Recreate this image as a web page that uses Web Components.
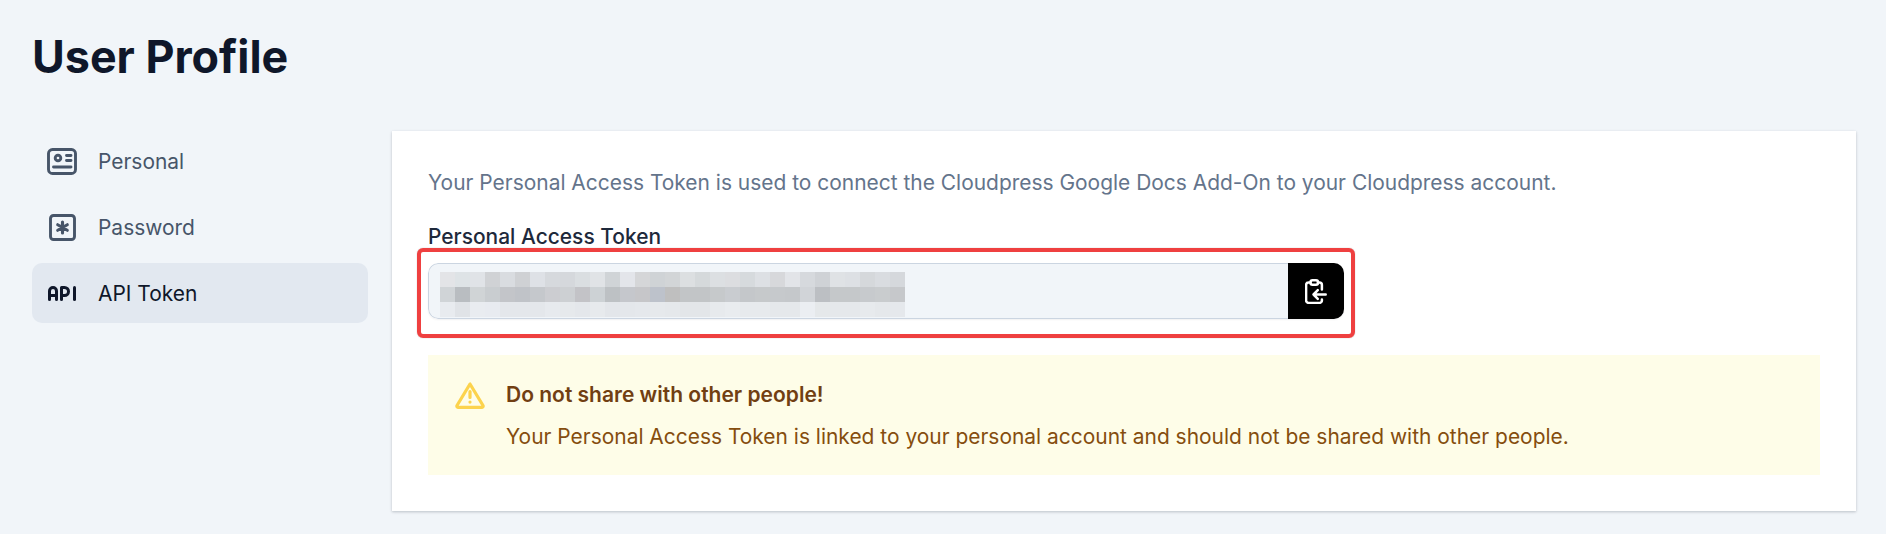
<!DOCTYPE html>
<html>
<head>
<meta charset="utf-8">
<style>
  html, body { margin: 0; background: #f1f5f9; }
  body { font-family: Inter, "Liberation Sans", sans-serif; }
</style>
</head>
<body>
<user-profile>
  <side-nav slot="nav">
    <nav-item icon="personal">Personal</nav-item>
    <nav-item icon="password">Password</nav-item>
    <nav-item icon="api" active>API Token</nav-item>
  </side-nav>
  <token-card slot="main">
    <token-field label="Personal Access Token"></token-field>
    <warn-box heading="Do not share with other people!">Your Personal Access Token is linked to your personal account and should not be shared with other people.</warn-box>
  </token-card>
</user-profile>
<script>
const ICONS = {
  personal: `<svg width="30" height="27" viewBox="0 0 30 27" fill="none" stroke="currentColor" stroke-width="2.900" stroke-linecap="round" stroke-linejoin="round">
    <rect x="1.500" y="1.500" width="27" height="24" rx="4"/>
    <circle cx="11" cy="10" r="2.800"/>
    <path d="M19.500 7.500h4.500M19.500 12.500h4.500M6.500 19h17.500"/></svg>`,
  password: `<svg width="27" height="27" viewBox="0 0 27 27" fill="none" stroke="currentColor" stroke-linecap="round" stroke-linejoin="round">
    <rect x="1.500" y="1.500" width="24" height="24" rx="3" stroke-width="2.900"/>
    <path d="M13.500 8v11M8.700 10.750l9.600 5.500M18.300 10.750l-9.600 5.500" stroke-width="3.100"/></svg>`,
  api: `<svg width="28" height="15" viewBox="0 0 28 15" fill="none" stroke="currentColor" stroke-width="3" stroke-linecap="round" stroke-linejoin="round">
    <path d="M1.500 13.500V5a3.500 3.500 0 0 1 7 0v8.500M1.500 9.500h7"/>
    <path d="M13.500 13.500V1.500h3a4 4 0 0 1 0 8h-3"/>
    <path d="M26.500 1.500v12"/></svg>`
};

class UserProfile extends HTMLElement {
  connectedCallback() {
    this.attachShadow({ mode: 'open' });
    this.shadowRoot.innerHTML = `
      <style>
        :host { display: block; padding: 32px 30px 23px 32px; color: #0f172a; }
        h1 { margin: 0 0 49px; font-size: 44.800px; line-height: 50px; font-weight: 700; }
        .cols { display: grid; grid-template-columns: 336px 1fr; gap: 24px; }
      </style>
      <h1>User Profile</h1>
      <div class="cols"><slot name="nav"></slot><slot name="main"></slot></div>
    `;
  }
}

class SideNav extends HTMLElement {
  connectedCallback() {
    this.attachShadow({ mode: 'open' });
    this.shadowRoot.innerHTML = `
      <style>
        :host { display: flex; flex-direction: column; gap: 6px; }
      </style>
      <slot></slot>
    `;
  }
}

class NavItem extends HTMLElement {
  connectedCallback() {
    this.attachShadow({ mode: 'open' });
    this.shadowRoot.innerHTML = `
      <style>
        :host { display: flex; align-items: center; height: 60px; border-radius: 10px; font-size: 20.950px; color: #475569; }
        :host([active]) { background: #e2e8f0; color: #0f172a; }
        .icon { width: 60px; margin-right: 6px; flex: none; display: flex; justify-content: center; }
        .icon svg { display: block; }
      </style>
      <span class="icon">${ICONS[this.getAttribute('icon')]}</span>
      <slot></slot>
    `;
  }
}

class TokenCard extends HTMLElement {
  connectedCallback() {
    this.attachShadow({ mode: 'open' });
    this.shadowRoot.innerHTML = `
      <style>
        :host { display: block; background: #fff; padding: 36px; box-shadow: 0 1px 3px rgba(15,23,42,.16), 0 1px 2px rgba(15,23,42,.08); }
        p { margin: 0 0 24px; font-size: 20.950px; line-height: 32px; color: #64748b; }
      </style>
      <p>Your Personal Access Token is used to connect the Cloudpress Google Docs Add-On to your Cloudpress account.</p>
      <slot></slot>
    `;
  }
}

// blurred token, one row of block colours per pixelated line
const BLUR = [
  'e3e4e7 dee3e6 e0e3e7 d0d2d5 d9dce0 cfd1d4 dee1e6 d6d9dd d5d8dc dadee1 e0e3e6 d0d4d7 e3e5ea d5d6d8 cfd3d6 d2d5d7 dcdfe1 d5d9db dcdfe2 dcdde0 d6dadd dde0e4 d7d8db e2e4e8 d6d9dd cfd2d6 dfe2e5 dde0e4 d5d8db d9dce0 d5d8dc',
  'd0d4d7 b9bdc1 d0d4d6 c9cdd0 c3c5c9 c0c3c8 c5c8cc cccdd1 cdd0d3 c3c3c7 cdd2d5 bdc1c4 c5c7cc c6c6c9 bdc2cb bfbfbf c2c5c7 c2c5c7 c6c9cb c9ccd0 c4c7ca c6c9cb c6c9cc c5c8cb d1d4d8 bcbfc3 c5c8ca c5c8ca c7cacd c9ccce c6c8cb',
  'e8ebef e0e3e7 e9ecf0 e8ebf0 e4e7eb e4e7eb e4e7eb e7eaee e6e9ec e4e7eb e7eaed e3e6ea e4e7eb e5e8ec e6e9ec e5e8eb e3e6e9 e3e6e9 e7eaed e9ecef e7eaed e7eaed e5e8eb e5e8eb ebeef2 e5e8ea e5e8eb e5e8eb e7eaed e5e8eb e5e8ec'
];

class TokenField extends HTMLElement {
  connectedCallback() {
    this.attachShadow({ mode: 'open' });
    const cells = BLUR.map(r => r.split(' ').map(c => `<i style="background:#${c}"></i>`).join('')).join('');
    this.shadowRoot.innerHTML = `
      <style>
        :host { display: block; color: #1e293b; font-size: 20.950px; }
        label { display: block; line-height: 28px; font-weight: 500; margin-bottom: 12px; }
        .outline { position: relative; width: 916px; }
        .outline::after { content: ""; position: absolute; left: -11px; right: -11px; top: -15px; bottom: -19px; border: 4px solid #ef4040; border-radius: 6px; box-shadow: 0 0 1px rgba(60,60,60,.5); pointer-events: none; }
        .row { display: flex; height: 56px; border-radius: 10px; overflow: hidden; box-shadow: 0 1px 2px rgba(15,23,42,.06); }
        .input { flex: 1; box-sizing: border-box; background: #f1f5f9; border: 1px solid #cbd5e1; border-right: 0; border-radius: 10px 0 0 10px; padding: 8px 0 0 11px; }
        .blur { display: grid; grid-template-columns: repeat(31, 15px); grid-auto-rows: 15px; }
        .blur i { display: block; }
        button { flex: none; width: 56px; border: 0; padding: 0; background: #000; color: #fff; display: flex; align-items: center; justify-content: center; }
      </style>
      <label>${this.getAttribute('label')}</label>
      <div class="outline">
        <div class="row">
          <div class="input"><div class="blur">${cells}</div></div>
          <button>
            <svg width="22" height="25" viewBox="0 0 22 25" fill="none" stroke="currentColor" stroke-width="2.500" stroke-linecap="round" stroke-linejoin="round">
              <path d="M5.500 3.500H3.600a2.500 2.500 0 0 0-2.500 2.500v15.400a2.500 2.500 0 0 0 2.500 2.500h10.800a2.500 2.500 0 0 0 2.500-2.500V20.500"/>
              <path d="M13 3.500h1.400a2.500 2.500 0 0 1 2.500 2.500V10.500"/>
              <rect x="5.500" y="1.250" width="7.500" height="4.500" rx="2"/>
              <path d="M20.700 15.500H8.500M12.800 11.200l-4.300 4.300 4.300 4.300"/>
            </svg>
          </button>
        </div>
      </div>
    `;
  }
}

class WarnBox extends HTMLElement {
  connectedCallback() {
    this.attachShadow({ mode: 'open' });
    this.shadowRoot.innerHTML = `
      <style>
        :host { display: flex; gap: 21px; margin-top: 36px; padding: 26px 27px; background: #fefde8; color: #854d0e; font-size: 20.950px; height: 120px; box-sizing: border-box; }
        svg { flex: none; display: block; margin-top: 1px; }
        h3 { margin: 0 0 14px; font-size: 21px; line-height: 28px; font-weight: 600; color: #713f12; }
        div { line-height: 28px; }
      </style>
      <svg width="30" height="27" viewBox="0 0 30 27" fill="none" stroke="#fcd34d" stroke-width="3.200" stroke-linecap="round" stroke-linejoin="round">
        <path d="M15 2 2 23.500a1.200 1.200 0 0 0 1 1.800h24a1.200 1.200 0 0 0 1-1.800z"/>
        <path d="M15 9.500v6M15 20v.1"/>
      </svg>
      <div><h3>${this.getAttribute('heading')}</h3><slot></slot></div>
    `;
  }
}

customElements.define('user-profile', UserProfile);
customElements.define('side-nav', SideNav);
customElements.define('nav-item', NavItem);
customElements.define('token-card', TokenCard);
customElements.define('token-field', TokenField);
customElements.define('warn-box', WarnBox);
</script>
</body>
</html>
